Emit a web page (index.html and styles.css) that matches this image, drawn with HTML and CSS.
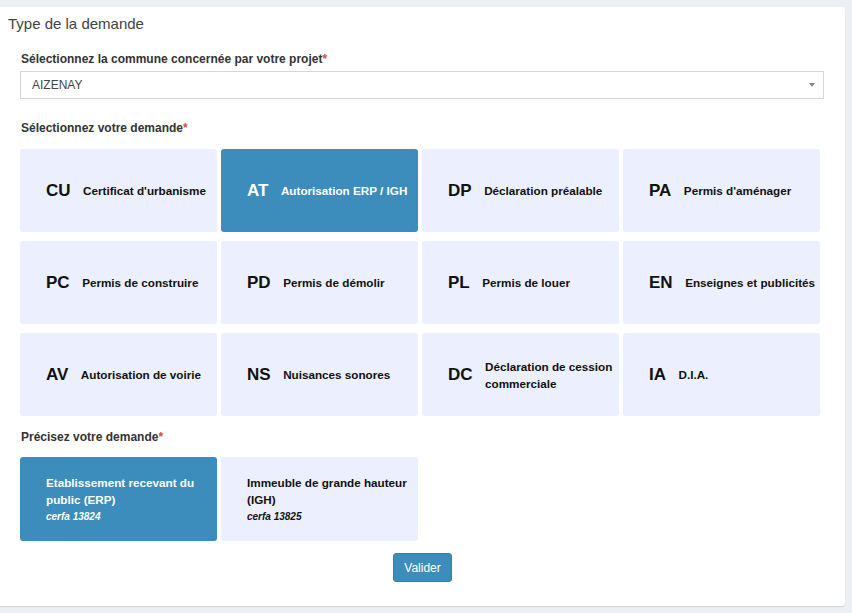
FILE: index.html
```html
<!DOCTYPE html>
<html lang="fr">
<head>
<meta charset="utf-8">
<title>Type de la demande</title>
<link rel="stylesheet" href="styles.css">
</head>
<body>
<div class="box">
  <div class="box-header"><h3 class="box-title">Type de la demande</h3></div>
  <div class="box-body">
    <div class="form-group">
      <label class="lbl">Sélectionnez la commune concernée par votre projet<span class="req">*</span></label>
      <div class="select">
        <span class="select-value">AIZENAY</span>
        <span class="select-arrow"></span>
      </div>
    </div>

    <div class="form-group group-types">
      <label class="lbl">Sélectionnez votre demande<span class="req">*</span></label>
      <div class="cards">
        <div class="card"><span class="code">CU</span><span class="name">Certificat d'urbanisme</span></div>
        <div class="card active"><span class="code">AT</span><span class="name">Autorisation ERP / IGH</span></div>
        <div class="card"><span class="code">DP</span><span class="name">Déclaration préalable</span></div>
        <div class="card"><span class="code">PA</span><span class="name">Permis d'aménager</span></div>
        <div class="card"><span class="code">PC</span><span class="name">Permis de construire</span></div>
        <div class="card"><span class="code">PD</span><span class="name">Permis de démolir</span></div>
        <div class="card"><span class="code">PL</span><span class="name">Permis de louer</span></div>
        <div class="card"><span class="code">EN</span><span class="name">Enseignes et publicités</span></div>
        <div class="card"><span class="code">AV</span><span class="name">Autorisation de voirie</span></div>
        <div class="card"><span class="code">NS</span><span class="name">Nuisances sonores</span></div>
        <div class="card"><span class="code">DC</span><span class="name">Déclaration de cession commerciale</span></div>
        <div class="card"><span class="code">IA</span><span class="name">D.I.A.</span></div>
      </div>
    </div>

    <div class="form-group group-sub">
      <label class="lbl">Précisez votre demande<span class="req">*</span></label>
      <div class="cards">
        <div class="card sub active"><div class="sub-text"><span class="name">Etablissement recevant du public (ERP)</span><span class="cerfa">cerfa 13824</span></div></div>
        <div class="card sub"><div class="sub-text"><span class="name">Immeuble de grande hauteur (IGH)</span><span class="cerfa">cerfa 13825</span></div></div>
      </div>
    </div>

    <div class="actions"><button class="btn" type="button">Valider</button></div>
  </div>
</div>
</body>
</html>
```
FILE: styles.css
```css
* { box-sizing: border-box; }
html, body { margin: 0; padding: 0; }
body {
  background: #ecf0f5;
  font-family: "Liberation Sans", Arial, sans-serif;
  color: #333;
  width: 852px;
  height: 613px;
  overflow: hidden;
}
.box {
  margin-top: 7px;
  width: 845px;
  background: #fff;
  border-radius: 0 3px 3px 0;
  box-shadow: 0 1px 1px rgba(0,0,0,0.12);
  padding-bottom: 24px;
}
.box-header { padding: 8px 8px 0; }
.box-title {
  margin: 0;
  font-size: 15px;
  line-height: 18px;
  font-weight: normal;
  color: #444;
}
.box-body { padding: 18px 21px 0 20px; }
.lbl {
  display: block;
  font-size: 12px;
  font-weight: bold;
  line-height: 17px;
  margin: 0 0 3px 1px;
  color: #333;
}
.req { color: #dd4b39; }
.select {
  position: relative;
  height: 28px;
  border: 1px solid #d2d6de;
  display: flex;
  align-items: center;
  padding-left: 11px;
  font-size: 12px;
  color: #444;
}
.select-arrow {
  position: absolute;
  right: 8px;
  top: 11px;
  width: 0; height: 0;
  border-style: solid;
  border-width: 4px 3px 0 3px;
  border-color: #888 transparent transparent transparent;
}
.group-types { margin-top: 21px; }
.group-types .lbl { margin-bottom: 12px; }
.cards {
  display: grid;
  grid-template-columns: repeat(4, 1fr);
  column-gap: 4px;
  row-gap: 9px;
  padding-right: 4px;
}
.card {
  height: 83px;
  background: #eceffd;
  border-radius: 3px;
  display: flex;
  align-items: center;
  padding: 0 2px 0 26px;
  color: #111;
}
.card.active { background: #3c8dbc; color: #fff; }
.code {
  font-size: 17px;
  font-weight: bold;
  margin-right: 12.5px;
  flex: none;
}
.name {
  font-size: 11.7px;
  font-weight: bold;
  line-height: 17px;
}
.group-sub { margin-top: 13px; }
.group-sub .lbl { margin-bottom: 11px; }
.card.sub { height: 84px; padding-right: 4px; }
.sub-text { display: flex; flex-direction: column; }
.cerfa {
  font-size: 10px;
  font-weight: bold;
  font-style: italic;
  line-height: 17px;
}
.actions {
  display: flex;
  justify-content: center;
  margin-top: 12px;
  padding-left: 1px;
}
.btn {
  height: 29px;
  padding: 0 10px;
  background: #3c8dbc;
  border: 1px solid #367fa9;
  border-radius: 3px;
  color: #fff;
  font-family: "Liberation Sans", Arial, sans-serif;
  font-size: 12px;
}
```
